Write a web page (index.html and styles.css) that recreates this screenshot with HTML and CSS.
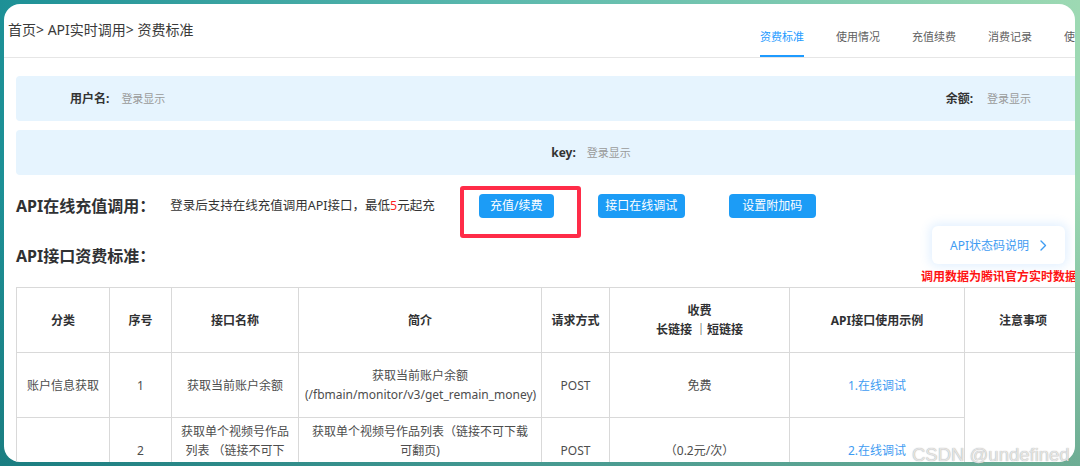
FILE: index.html
```html
<!DOCTYPE html>
<html lang="zh-CN">
<head>
<meta charset="utf-8">
<title>资费标准</title>
<link rel="stylesheet" href="styles.css">
</head>
<body>
<div class="card">
  <header class="topbar">
    <div class="crumb">首页&gt; API实时调用&gt; 资费标准</div>
    <nav class="tabs">
      <span class="tab active">资费标准</span>
      <span class="tab">使用情况</span>
      <span class="tab">充值续费</span>
      <span class="tab">消费记录</span>
      <span class="tab">使用说明</span>
    </nav>
  </header>

  <main class="content">
    <div class="infobox infobox-split">
      <div class="pair"><span class="label">用户名:</span><span class="value value-user">登录显示</span></div>
      <div class="pair"><span class="label">余额:</span><span class="value value-bal">登录显示</span></div>
    </div>
    <div class="infobox infobox-center">
      <div class="pair"><span class="label">key:</span><span class="value value-key">登录显示</span></div>
    </div>

    <div class="recharge">
      <h2 class="title">API在线充值调用：</h2>
      <p class="desc">登录后支持在线充值调用API接口，最低<span class="red">5</span>元起充</p>
      <button class="btn btn-first">充值/续费</button>
      <button class="btn btn-wide">接口在线调试</button>
      <button class="btn btn-wide">设置附加码</button>
    </div>

    <div class="std-row">
      <h2 class="title std-title">API接口资费标准：</h2>
      <div class="std-side">
        <div class="status-card">
          <span>API状态码说明</span>
          <svg class="chev" width="7" height="11" viewBox="0 0 7 11"><polyline points="1,1 5.5,5.5 1,10" fill="none" stroke="#3f9cf2" stroke-width="1.4" stroke-linecap="round" stroke-linejoin="round"/></svg>
        </div>
        <div class="notice">调用数据为腾讯官方实时数据</div>
      </div>
    </div>

    <table class="price">
      <colgroup>
        <col style="width:93px"><col style="width:62px"><col style="width:127px"><col style="width:243px">
        <col style="width:68px"><col style="width:180px"><col style="width:175px"><col style="width:117px">
      </colgroup>
      <thead>
        <tr class="hrow">
          <th>分类</th><th>序号</th><th>接口名称</th><th>简介</th><th>请求方式</th>
          <th>收费<br>长链接 ｜短链接</th><th>API接口使用示例</th><th>注意事项</th>
        </tr>
      </thead>
      <tbody>
        <tr class="brow">
          <td>账户信息获取</td><td>1</td><td>获取当前账户余额</td>
          <td>获取当前账户余额<br>(/fbmain/monitor/v3/get_remain_money)</td>
          <td>POST</td><td>免费</td><td class="link">1.在线调试</td><td rowspan="2"></td>
        </tr>
        <tr>
          <td></td><td>2</td><td>获取单个视频号作品<br>列表 （链接不可下<br>载,可翻页)</td>
          <td>获取单个视频号作品列表（链接不可下载<br>可翻页)<br>(/fbmain/monitor/v3/wxvideo)</td>
          <td>POST</td><td>（0.2元/次）</td><td class="link">2.在线调试</td>
        </tr>
      </tbody>
    </table>
  </main>
</div>
<div class="mark-box" aria-hidden="true"></div>
<div class="watermark">CSDN @undefined</div>
</body>
</html>
```
FILE: styles.css
```css
* { box-sizing: border-box; }
html, body { margin: 0; padding: 0; }
body {
  width: 1080px;
  height: 466px;
  overflow: hidden;
  position: relative;
  font-family: "Noto Sans", "Noto Sans CJK SC", sans-serif;
  background:
    linear-gradient(to bottom, rgba(0,0,0,0) 40%, rgba(20,90,90,0.35) 100%),
    linear-gradient(to right, #1d9096 0%, #5ab8ad 45%, #9dd9b3 100%);
}
.card {
  margin: 4px 0 0 4px;
  width: 1071px;
  height: 458px;
  background: #fff;
  border-radius: 16px;
  overflow: hidden;
}
.topbar {
  display: flex;
  height: 54px;
  border-bottom: 1px solid #e6e6e6;
  padding-left: 4px;
  white-space: nowrap;
}
.crumb {
  flex: 0 0 752px;
  padding-top: 16px;
  font-size: 14px;
  line-height: 20px;
  color: #3a3a3a;
}
.tabs { display: flex; gap: 32px; }
.tab {
  flex: 0 0 auto;
  height: 53px;
  padding-top: 25px;
  font-size: 11px;
  line-height: 16px;
  color: #5f5f5f;
  border-bottom: 2px solid transparent;
}
.tab.active { color: #1e9bff; border-bottom-color: #1e9bff; }

.content { padding: 18px 0 0 12px; width: 1200px; }
.infobox {
  width: 1150px;
  height: 45px;
  background: #e6f4fe;
  border-radius: 4px;
  display: flex;
  align-items: center;
  white-space: nowrap;
}
.infobox + .infobox { margin-top: 9px; }
.infobox-split { justify-content: space-between; padding: 0 138px 0 54px; }
.infobox-center { justify-content: center; }
.pair { display: flex; align-items: center; }
.label { font-size: 12px; font-weight: 700; color: #333; line-height: 16px; }
.value { font-size: 11px; color: #9a9a9a; line-height: 16px; }
.value-user { margin-left: 12px; }
.value-bal { margin-left: 14px; }
.value-key { margin-left: 11px; }
.infobox-split .pair + .pair { margin-right: -3px; }

.recharge {
  display: flex;
  align-items: center;
  margin-top: 18px;
  height: 25px;
  white-space: nowrap;
}
.title {
  margin: 0;
  font-size: 16px;
  line-height: 24px;
  font-weight: 700;
  color: #303133;
}
.desc {
  margin: 0 0 0 15px;
  font-size: 12.5px;
  line-height: 16px;
  color: #333;
}
.red { color: #ff1f1f; }
.btn {
  height: 24px;
  border: 0;
  border-radius: 4px;
  background: #1c9cf6;
  color: #fff;
  font-family: inherit;
  font-size: 12px;
  line-height: 24px;
  padding: 0;
  margin-left: 44px;
  text-align: center;
}
.btn-first { width: 75px; }
.btn-wide { width: 87px; }

.std-row { display: flex; height: 69px; white-space: nowrap; }
.std-title { flex: 0 0 905px; margin-top: 26px; }
.std-side { padding-top: 8px; }
.status-card {
  margin-left: 11px;
  width: 133px;
  height: 38px;
  border-radius: 6px;
  background: #fff;
  box-shadow: 0 0 10px 3px rgba(90,165,255,0.16);
  display: flex;
  align-items: center;
  padding-left: 18px;
  font-size: 12px;
  color: #3f9cf2;
}
.chev { margin-left: 11px; }
.notice {
  margin-top: 5px;
  font-size: 12px;
  line-height: 16px;
  font-weight: 700;
  color: #ff1414;
}

.price {
  margin-top: 0;
  border-collapse: collapse;
  table-layout: fixed;
  width: 1065px;
  font-size: 12px;
  line-height: 19px;
  color: #4d4d4d;
}
.price th, .price td {
  border: 1px solid #d9d9d9;
  text-align: center;
  vertical-align: middle;
  padding: 4px 6px;
  white-space: nowrap;
}
.price th { font-weight: 700; color: #303133; }
.hrow { height: 65px; }
.brow { height: 65px; }
.link { color: #3f9cf2; }

.mark-box {
  position: absolute;
  left: 460px;
  top: 186px;
  width: 121px;
  height: 52px;
  border: 4px solid #ff2c48;
  border-radius: 3px;
}
.watermark {
  position: absolute;
  left: 912px;
  top: 443px;
  font-family: "Liberation Sans", Arial, sans-serif;
  font-size: 18.5px;
  line-height: 24px;
  color: rgba(240,240,240,0.85);
  text-shadow: 0 0 1px rgba(130,130,130,0.85);
  white-space: nowrap;
}
```
